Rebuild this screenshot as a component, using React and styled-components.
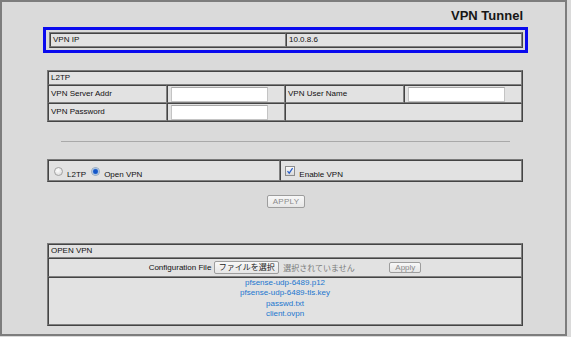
import styled, { createGlobalStyle } from "styled-components";

const FILES = [
  "pfsense-udp-6489.p12",
  "pfsense-udp-6489-tls.key",
  "passwd.txt",
  "client.ovpn",
];

const GlobalStyle = createGlobalStyle`
  html, body {
    margin: 0;
    padding: 0;
    background: #dadada;
  }
  body {
    font-family: "Liberation Sans", Arial, "Noto Sans CJK JP", sans-serif;
    font-size: 8px;
    color: #111;
  }
`;

const Frame = styled.div`
  box-sizing: border-box;
  width: 567px;
  height: 336px;
  border: 2px solid #7d7d7d;
  padding: 6px 0 0 45px;
  display: flex;
  flex-direction: column;
  align-items: flex-start;
`;

const Title = styled.h1`
  width: 476px;
  margin: 0;
  text-align: right;
  font-size: 13px;
  line-height: 15px;
  font-weight: 700;
  color: #161616;
`;

const Highlight = styled.div`
  box-sizing: border-box;
  width: 485px;
  margin: 4px 0 0 -4px;
  padding: 2px 2px 2px 3px;
  border: 3px solid #0a0aee;
`;

const Table = styled.table`
  width: ${(p) => p.$width || 476}px;
  margin-top: ${(p) => p.$top || 0}px;
  border-collapse: separate;
  border-spacing: 0;
  table-layout: fixed;
  border: 1px solid;
  border-color: #7a7a7a #444 #444 #7a7a7a;
`;

const Cell = styled.td`
  width: ${(p) => p.$w || "auto"};
  padding: ${(p) => p.$pad || "0 2px"};
  border: 1px solid;
  border-color: #444 #808080 #808080 #444;
  background: #e2e2e2;
  line-height: 12px;
  text-align: ${(p) => p.$align || "left"};
  vertical-align: middle;
  white-space: nowrap;
`;

const TextInput = styled.input`
  display: block;
  box-sizing: border-box;
  width: 97px;
  height: 15px;
  margin: 1px 0 0 1px;
  padding: 0 2px;
  border: 1px solid #c4c4c4;
  border-top-color: #a8a8a8;
  background: #fff;
  font: inherit;
  outline: none;
`;

const Rule = styled.hr`
  width: 449px;
  margin: 19px 0 0 14px;
  border: 0;
  border-top: 1px solid #a9a9a9;
  height: 0;
`;

const OptionRow = styled.div`
  display: flex;
  align-items: flex-end;
  height: 19px;
`;

const Radio = styled.span`
  box-sizing: border-box;
  width: 9px;
  height: 9px;
  margin: 0 ${(p) => p.$gap || 4}px 4px ${(p) => p.$left || 0}px;
  border-radius: 50%;
  border: 1px solid ${(p) => (p.$checked ? "#8ea4bd" : "#a3a3a3")};
  background: ${(p) =>
    p.$checked
      ? "radial-gradient(circle, #1356c8 0 1.8px, #5b8fd8 2.6px, #eef3f8 3.4px)"
      : "radial-gradient(circle at 40% 35%, #ffffff, #d4d4d4)"};
`;

const Check = styled.span`
  box-sizing: border-box;
  display: flex;
  align-items: center;
  justify-content: center;
  width: 10px;
  height: 10px;
  margin: 0 4px 4px 2px;
  border: 1px solid #8c8c8c;
  background: linear-gradient(#fafafa, #d8d8d8);
`;

const OptionLabel = styled.span`
  line-height: 10px;
  margin-right: ${(p) => p.$gap || 0}px;
`;

const Button = styled.button`
  box-sizing: border-box;
  width: ${(p) => p.$w}px;
  height: ${(p) => p.$h}px;
  margin: 0;
  padding: 0;
  border: 1px solid #9d9d9d;
  border-radius: 2px;
  background: linear-gradient(#f8f8f8, #e6e6e6);
  color: ${(p) => (p.$dim ? "#8a8a8a" : "#222")};
  font-family: "Liberation Sans", Arial, "Noto Sans CJK JP", sans-serif;
  font-size: ${(p) => p.$size || 8}px;
  line-height: 1;
  letter-spacing: ${(p) => p.$spacing || 0}px;
`;

const ApplyButton = styled(Button)`
  margin-top: 13px;
  margin-left: 220px;
`;

const FileRow = styled.div`
  display: flex;
  align-items: center;
  justify-content: center;
  height: 17px;
`;

const FileLabel = styled.span`
  margin-right: 3px;
`;

const FileStatus = styled.span`
  width: 106px;
  margin-left: 4px;
  color: #7a7a7a;
  font-family: "Noto Sans CJK JP", sans-serif;
  font-size: 8px;
  text-align: left;
`;

const FileList = styled.div`
  display: flex;
  flex-direction: column;
  align-items: center;
  padding: 0 0 2px;
  line-height: 10.4px;
`;

const FileLink = styled.a`
  color: #2176cf;
  text-decoration: none;
`;

const CheckMark = () => (
  <svg width="8" height="8" viewBox="0 0 8 8">
    <path d="M1.5 4.2 L3.2 6.2 L6.6 1.2" fill="none" stroke="#2a5fc8" strokeWidth="1.2" />
  </svg>
);

export default function App() {
  return (
    <>
      <GlobalStyle />
      <Frame>
        <Title>VPN Tunnel</Title>

        <Highlight>
          <Table $width={474}>
            <tbody>
              <tr>
                <Cell $w="50%">VPN IP</Cell>
                <Cell $w="50%">10.0.8.6</Cell>
              </tr>
            </tbody>
          </Table>
        </Highlight>

        <Table $top={17}>
          <tbody>
            <tr>
              <Cell colSpan={4}>L2TP</Cell>
            </tr>
            <tr>
              <Cell $w="25%">VPN Server Addr</Cell>
              <Cell $w="25%">
                <TextInput type="text" />
              </Cell>
              <Cell $w="25%">VPN User Name</Cell>
              <Cell $w="25%">
                <TextInput type="text" />
              </Cell>
            </tr>
            <tr>
              <Cell>VPN Password</Cell>
              <Cell>
                <TextInput type="password" />
              </Cell>
              <Cell colSpan={2} />
            </tr>
          </tbody>
        </Table>

        <Rule />

        <Table $top={17}>
          <tbody>
            <tr>
              <Cell $w="49%">
                <OptionRow>
                  <Radio $left={3} />
                  <OptionLabel $gap={5}>L2TP</OptionLabel>
                  <Radio $checked />
                  <OptionLabel>Open VPN</OptionLabel>
                </OptionRow>
              </Cell>
              <Cell $w="51%">
                <OptionRow>
                  <Check>
                    <CheckMark />
                  </Check>
                  <OptionLabel>Enable VPN</OptionLabel>
                </OptionRow>
              </Cell>
            </tr>
          </tbody>
        </Table>

        <ApplyButton $w={38} $h={13} $dim $spacing={0.3} disabled>
          APPLY
        </ApplyButton>

        <Table $top={35}>
          <tbody>
            <tr>
              <Cell>OPEN VPN</Cell>
            </tr>
            <tr>
              <Cell $align="center">
                <FileRow>
                  <FileLabel>Configuration File</FileLabel>
                  <Button $w={65} $h={13} $size={8}>
                    ファイルを選択
                  </Button>
                  <FileStatus>選択されていません</FileStatus>
                  <Button $w={32} $h={11} $dim>
                    Apply
                  </Button>
                </FileRow>
              </Cell>
            </tr>
            <tr>
              <Cell $pad="0 2px 2px">
                <FileList>
                  {FILES.map((name) => (
                    <FileLink key={name} href="#">
                      {name}
                    </FileLink>
                  ))}
                </FileList>
              </Cell>
            </tr>
          </tbody>
        </Table>
      </Frame>
    </>
  );
}
